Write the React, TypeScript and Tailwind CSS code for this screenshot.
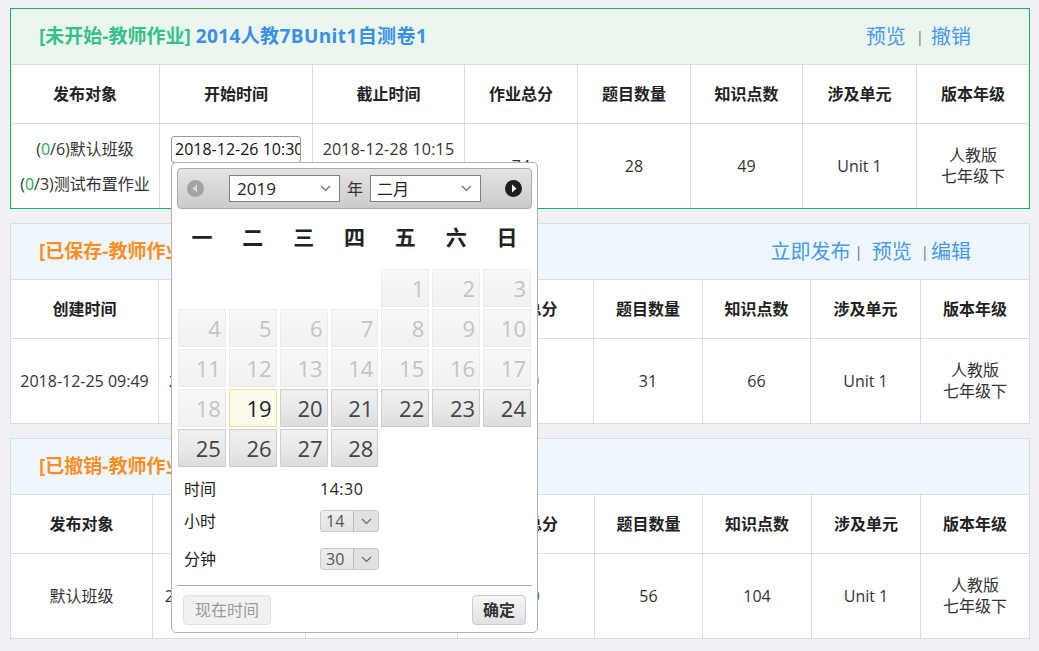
import React from "react";

const FONT = { fontFamily: '"Open Sans", "Noto Sans CJK SC", sans-serif' };

type Card = {
  status: string;
  statusColor: string;
  title: string;
  active: boolean;
  links: { text: string; sepBefore?: string }[];
  cols: string;
  heads: string[];
};

const CARDS: Card[] = [
  {
    status: "[未开始-教师作业]",
    statusColor: "text-[#36c08c]",
    title: "2014人教7BUnit1自测卷1",
    active: true,
    links: [{ text: "预览" }, { text: "撤销", sepBefore: "ml-[10px] mr-[7px]" }],
    cols: "grid-cols-[149px_153px_152px_113px_113px_112px_114px_112px]",
    heads: ["发布对象", "开始时间", "截止时间", "作业总分", "题目数量", "知识点数", "涉及单元", "版本年级"],
  },
  {
    status: "[已保存-教师作业]",
    statusColor: "text-[#ff8e1e]",
    title: "2014人教7BUnit1自测卷1",
    active: false,
    links: [
      { text: "立即发布" },
      { text: "预览", sepBefore: "ml-[4px] mr-[9px]" },
      { text: "编辑", sepBefore: "ml-[9px] mr-[2px]" },
    ],
    cols: "grid-cols-[148px_149px_150px_136px_109px_108px_110px_108px]",
    heads: ["创建时间", "开始时间", "截止时间", "作业总分", "题目数量", "知识点数", "涉及单元", "版本年级"],
  },
  {
    status: "[已撤销-教师作业]",
    statusColor: "text-[#ff8e1e]",
    title: "2014人教7BUnit1自测卷1",
    active: false,
    links: [],
    cols: "grid-cols-[142px_153px_152px_137px_108px_109px_109px_108px]",
    heads: ["发布对象", "开始时间", "截止时间", "作业总分", "题目数量", "知识点数", "涉及单元", "版本年级"],
  },
];

function Grade() {
  return (
    <div className="leading-[21px]">
      人教版
      <br />
      七年级下
    </div>
  );
}

function BodyCells({ index }: { index: number }) {
  const cell = "h-[84px] border-r border-[#dcdcdc] flex items-center justify-center text-center";
  const top = "h-[84px] border-r border-[#dcdcdc] pt-[8px] text-center leading-[35px]";
  if (index === 0) {
    return (
      <>
        <div className={top}>
          <div>
            (<span className="text-[#1aad4f]">0</span>/6)默认班级
          </div>
          <div>
            (<span className="text-[#1aad4f]">0</span>/3)测试布置作业
          </div>
        </div>
        <div className={top}>
          <div className="flex h-[35px] items-center justify-center">
            <div className="h-[27px] w-[130px] overflow-hidden whitespace-nowrap rounded-[3px] border border-[#999] bg-white pl-[3px] text-left leading-[25px] text-[#111]">
              2018-12-26 10:30
            </div>
          </div>
        </div>
        <div className={top + " tracking-[0.2px]"}>2018-12-28 10:15</div>
        <div className={cell}>74</div>
        <div className={cell}>28</div>
        <div className={cell}>49</div>
        <div className={cell}>Unit 1</div>
        <div className={cell + " border-r-0"}>
          <Grade />
        </div>
      </>
    );
  }
  const vals =
    index === 1
      ? ["2018-12-25 09:49", "2018-12-26 10:30", "2018-12-28 10:15", "100", "31", "66", "Unit 1"]
      : ["默认班级", "2018-12-26 10:30", "2018-12-28 10:15", "100", "56", "104", "Unit 1"];
  return (
    <>
      {vals.map((v, i) => (
        <div key={i} className={cell}>
          {v}
        </div>
      ))}
      <div className={cell + " border-r-0"}>
        <Grade />
      </div>
    </>
  );
}

function HomeworkCard({ card, index }: { card: Card; index: number }) {
  return (
    <div
      className={
        "border bg-white " + (card.active ? "border-[#1fae5b]" : "border-[#dcdcdc]")
      }
    >
      <div
        className={
          "flex h-[56px] items-center justify-between border-b border-[#dcdcdc] pl-[28px] pr-[58px] " +
          (card.active ? "bg-[#ebf6ef]" : "bg-[#eef7fe]")
        }
      >
        <div className="text-[19px] font-bold whitespace-nowrap">
          <span className={card.statusColor}>{card.status}</span>{" "}
          <span className="tracking-[0.4px] text-[#3b8fe8]">{card.title}</span>
        </div>
        <div className="flex items-center text-[20px] text-[#4a98ee]">
          {card.links.map((l, i) => (
            <React.Fragment key={i}>
              {l.sepBefore && (
                <span className={"text-[15px] text-[#7c7066] " + l.sepBefore}>|</span>
              )}
              <span>{l.text}</span>
            </React.Fragment>
          ))}
        </div>
      </div>
      <div className={"grid text-[16px] text-[#333] " + card.cols}>
        {card.heads.map((h, i) => (
          <div
            key={h + i}
            className={
              "flex h-[59px] items-center justify-center border-b border-[#dcdcdc] font-bold text-[#222] " +
              (i < 7 ? "border-r" : "")
            }
          >
            {h}
          </div>
        ))}
        <BodyCells index={index} />
      </div>
    </div>
  );
}

function Chevron({ className }: { className?: string }) {
  return (
    <svg width="11" height="7" viewBox="0 0 11 7" className={className}>
      <polyline points="1,1 5.5,5.5 10,1" fill="none" stroke="#666" strokeWidth="1.1" />
    </svg>
  );
}

function NavCircle({ dir }: { dir: "prev" | "next" }) {
  const prev = dir === "prev";
  return (
    <svg width="17" height="17" viewBox="0 0 17 17">
      <circle cx="8.5" cy="8.5" r="8.5" fill={prev ? "#a3a3a3" : "#1e1e1e"} />
      <polygon
        points={prev ? "10,4.5 10,12.5 5.5,8.5" : "7,4.5 7,12.5 11.5,8.5"}
        fill={prev ? "#d9d9d9" : "#ffffff"}
      />
    </svg>
  );
}

function TimeSelect({ value }: { value: string }) {
  return (
    <div className="flex h-[22px] w-[59px] overflow-hidden rounded-[3px] border border-[#c9c9c9] bg-linear-to-b from-[#eeeeee] to-[#e3e3e3]">
      <div className="flex w-[32px] items-center pl-[5px] text-[16px] leading-none text-[#555]">{value}</div>
      <div className="flex flex-1 items-center justify-center border-l border-[#b9b9b9] bg-[#e1e1e1]">
        <Chevron />
      </div>
    </div>
  );
}

function DatePicker() {
  const days: (number | null)[] = [null, null, null, null];
  for (let d = 1; d <= 28; d++) days.push(d);
  return (
    <div
      className="absolute left-[171px] top-[162px] w-[367px] rounded-[5px] border border-[#b3b3b3] bg-white px-[5px] pt-[5px] pb-[7px] text-[#222]"
      style={FONT}
    >
      <div className="flex h-[41px] items-center rounded-[4px] border border-[#aaaaaa] bg-linear-to-b from-[#e4e4e4] to-[#cbcbcb] pl-[9px] pr-[9px]">
        <NavCircle dir="prev" />
        <div className="ml-[25px] flex h-[27px] w-[111px] items-center justify-between border border-[#808080] bg-white pl-[7px] pr-[8px] text-[17px]">
          <span>2019</span>
          <Chevron />
        </div>
        <span className="mx-[7px] text-[16px] text-[#333]">年</span>
        <div className="flex h-[27px] w-[111px] items-center justify-between border border-[#808080] bg-white pl-[6px] pr-[8px] text-[16px]">
          <span>二月</span>
          <Chevron />
        </div>
        <div className="ml-auto">
          <NavCircle dir="next" />
        </div>
      </div>
      <div className="mx-[1px] mt-[9px] mb-[11px] grid h-[40px] grid-cols-7 gap-x-[3px] text-[21px] font-bold">
        {["一", "二", "三", "四", "五", "六", "日"].map((w) => (
          <div key={w} className="flex items-center justify-center">
            {w}
          </div>
        ))}
      </div>
      <div className="mx-[1px] grid grid-cols-7 gap-x-[3px] gap-y-[2px]">
        {days.map((d, i) => {
          if (d === null) return <div key={i} className="h-[38px]" />;
          let cls = "";
          if (d < 19)
            cls = "border-[#ebebeb] bg-linear-to-b from-[#f8f8f8] to-[#f1f1f1] text-[#c3c3c3]";
          else if (d === 19) cls = "border-[#f4de92] bg-[#fdfbee] text-[#222]";
          else cls = "border-[#cfcfcf] bg-linear-to-b from-[#f0f0f0] via-[#e9e9e9] to-[#dcdcdc] text-[#444]";
          return (
            <div
              key={i}
              className={"flex h-[38px] items-center justify-end border pr-[4px] text-[22px] " + cls}
            >
              {d}
            </div>
          );
        })}
      </div>
      <div className="mt-[8px] flex h-[28px] items-center pl-[7px] text-[16px]">
        <span className="w-[136px]">时间</span>
        <span className="tracking-[0.5px]">14:30</span>
      </div>
      <div className="mt-[2px] flex h-[32px] items-center pl-[7px] text-[16px]">
        <span className="w-[136px]">小时</span>
        <TimeSelect value="14" />
      </div>
      <div className="mt-[6px] flex h-[32px] items-center pl-[7px] text-[16px]">
        <span className="w-[136px]">分钟</span>
        <TimeSelect value="30" />
      </div>
      <div className="mt-[10px] h-px bg-[#aaaaaa]" />
      <div className="mt-[9px] flex items-center justify-between px-[6px]">
        <div className="flex h-[30px] w-[88px] items-center justify-center rounded-[4px] border border-[#e0e0e0] bg-[#f1f1f1] text-[16px] text-[#9a9a9a]">
          现在时间
        </div>
        <div className="flex h-[30px] w-[54px] items-center justify-center rounded-[4px] border border-[#cccccc] bg-linear-to-b from-[#f6f6f6] to-[#e2e2e2] text-[16px] font-bold text-[#333]">
          确定
        </div>
      </div>
    </div>
  );
}

export default function App() {
  return (
    <div className="relative min-h-[651px] bg-[#f0f1f5] px-[10px] pt-[8px] pb-[10px]" style={FONT}>
      <div className="flex w-[1020px] flex-col gap-[14px]">
        {CARDS.map((c, i) => (
          <HomeworkCard key={i} card={c} index={i} />
        ))}
      </div>
      <DatePicker />
    </div>
  );
}
